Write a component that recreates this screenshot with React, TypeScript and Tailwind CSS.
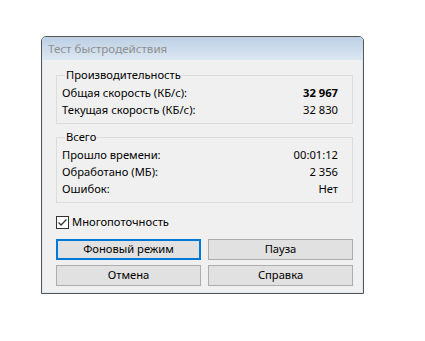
import React from 'react';

const font = { fontFamily: '"Noto Sans", "Open Sans", sans-serif' };

interface Row {
  label: string;
  value: string;
  bold?: boolean;
}

const perfRows: Row[] = [
  { label: 'Общая скорость (КБ/с):', value: '32 967', bold: true },
  { label: 'Текущая скорость (КБ/с):', value: '32 830' },
];

const totalRows: Row[] = [
  { label: 'Прошло времени:', value: '00:01:12' },
  { label: 'Обработано (МБ):', value: '2 356' },
  { label: 'Ошибок:', value: 'Нет' },
];

const Group: React.FC<{ title: string; rows: Row[]; className?: string }> = ({ title, rows, className }) => (
  <fieldset className={`border border-[#dcdcdc] pl-[5px] pr-[14px] pb-[4px] ${className ?? ''}`}>
    <legend className="ml-[3px] px-[1px] h-[16px] leading-[16px] text-[11.2px] text-black">{title}</legend>
    <div className="flex flex-col pt-[2px]">
      {rows.map(r => (
        <div key={r.label} className="flex justify-between items-center h-[17px] text-[11.2px] text-black">
          <span>{r.label}</span>
          <span className={r.bold ? 'font-bold' : ''}>{r.value}</span>
        </div>
      ))}
    </div>
  </fieldset>
);

const Button: React.FC<{ label: string; focused?: boolean }> = ({ label, focused }) => (
  <button
    className={`h-[21px] flex items-center justify-center bg-[#e1e1e1] text-[11.2px] text-black ${
      focused ? 'border-2 border-[#0078d7]' : 'border border-[#adadad]'
    }`}
  >
    {label}
  </button>
);

export default function App() {
  return (
    <div className="w-[425px] h-[341px] bg-white pt-[36px] pl-[41px]" style={font}>
      <div className="w-[323px] rounded-t-[5px] border border-[#555555] bg-[#dce8f4] px-[1px] pb-[1px]">
        <div className="h-[23px] -mx-[1px] rounded-t-[4px] bg-gradient-to-b from-[#bcd0e4] to-[#dce7f2] flex items-center pl-[6px]">
          <span className="text-[11.6px] text-[#8f8f8f]">Тест быстродействия</span>
        </div>
        <div className="bg-[#f0f0f0] pl-[13px] pr-[9px] pt-[7px] pb-[6px] flex flex-col">
          <Group title="Производительность" rows={perfRows} />
          <Group title="Всего" rows={totalRows} className="mt-[5px]" />
          <div className="mt-[12px] h-[15px] flex items-center gap-[3px]">
            <div className="w-[13px] h-[13px] border border-[#333333] bg-white flex items-center justify-center">
              <svg width="11" height="11" viewBox="0 0 11 11">
                <polyline points="1.5,5.5 4,8 9.5,2.5" fill="none" stroke="#333333" strokeWidth="1.3" />
              </svg>
            </div>
            <span className="text-[11.2px] text-black">Многопоточность</span>
          </div>
          <div className="mt-[9px] grid grid-cols-2 gap-x-[7px] gap-y-[5px]">
            <Button label="Фоновый режим" focused />
            <Button label="Пауза" />
            <Button label="Отмена" />
            <Button label="Справка" />
          </div>
        </div>
      </div>
    </div>
  );
}
